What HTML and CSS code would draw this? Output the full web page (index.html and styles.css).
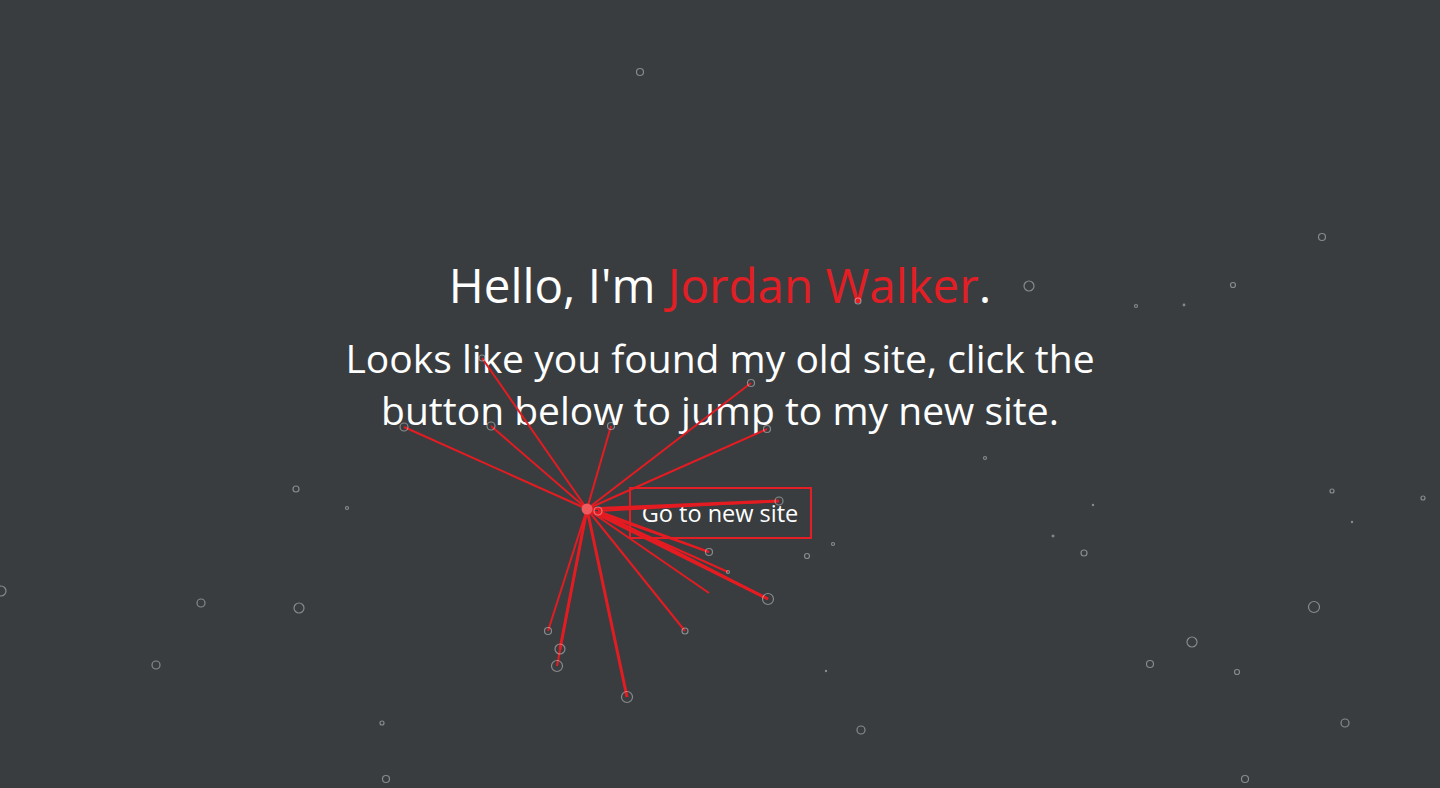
FILE: index.html
```html
<!DOCTYPE html>
<html lang="en">
<head>
<meta charset="utf-8">
<title>Jordan Walker</title>
<link rel="stylesheet" href="styles.css">
</head>
<body>
<main class="hero">
  <h1 class="title">Hello, I'm <span class="accent">Jordan Walker</span>.</h1>
  <p class="lead">Looks like you found my old site, click the<br>button below to jump to my new site.</p>
  <a class="btn" href="#">Go to new site</a>
</main>
<svg class="particles" width="1440" height="788" viewBox="0 0 1440 788" aria-hidden="true">
  <g class="links">
    <line x1="587" y1="509" x2="482" y2="358"/>
    <line x1="587" y1="509" x2="404" y2="427"/>
    <line x1="587" y1="509" x2="491" y2="426"/>
    <line x1="587" y1="509" x2="611" y2="426"/>
    <line x1="587" y1="509" x2="751" y2="383"/>
    <line x1="587" y1="509" x2="767" y2="429"/>
    <line class="thick" x1="587" y1="509" x2="779" y2="501"/>
    <line x1="587" y1="509" x2="709" y2="552"/>
    <line x1="587" y1="509" x2="728" y2="572"/>
    <line x1="587" y1="509" x2="709" y2="593"/>
    <line class="thick" x1="587" y1="509" x2="768" y2="599"/>
    <line x1="587" y1="509" x2="685" y2="631"/>
    <line x1="587" y1="509" x2="548" y2="631"/>
    <line class="thick" x1="587" y1="509" x2="560" y2="649"/>
    <line x1="587" y1="509" x2="557" y2="666"/>
    <line class="thick" x1="587" y1="509" x2="627" y2="697"/>
    <line x1="598" y1="511" x2="779" y2="501"/>
    <line x1="598" y1="511" x2="768" y2="599"/>
    <line x1="598" y1="511" x2="709" y2="552"/>
  </g>
  <g class="dots">
    <circle cx="640" cy="72" r="3.5"/>
    <circle cx="1322" cy="237" r="3.5"/>
    <circle cx="1029" cy="286" r="5"/>
    <circle cx="1233" cy="285" r="2.5"/>
    <circle cx="858" cy="301" r="3"/>
    <circle cx="1136" cy="306" r="1.5"/>
    <circle cx="1184" cy="305" r="0.8"/>
    <circle cx="985" cy="458" r="1.5"/>
    <circle cx="296" cy="489" r="3"/>
    <circle cx="347" cy="508" r="1.5"/>
    <circle cx="1332" cy="491" r="2"/>
    <circle cx="1423" cy="498" r="2"/>
    <circle cx="1093" cy="505" r="0.6"/>
    <circle cx="1053" cy="536" r="0.9"/>
    <circle cx="1084" cy="553" r="3"/>
    <circle cx="1352" cy="522" r="0.6"/>
    <circle cx="833" cy="544" r="1.5"/>
    <circle cx="807" cy="556" r="2.5"/>
    <circle cx="1" cy="591" r="5"/>
    <circle cx="201" cy="603" r="4"/>
    <circle cx="299" cy="608" r="5"/>
    <circle cx="1314" cy="607" r="5.5"/>
    <circle cx="1192" cy="642" r="5"/>
    <circle cx="156" cy="665" r="4"/>
    <circle cx="1150" cy="664" r="3.5"/>
    <circle cx="1237" cy="672" r="2.5"/>
    <circle cx="826" cy="671" r="0.6"/>
    <circle cx="382" cy="723" r="2"/>
    <circle cx="861" cy="730" r="4"/>
    <circle cx="1345" cy="723" r="4"/>
    <circle cx="386" cy="779" r="3.5"/>
    <circle cx="1245" cy="779" r="3.5"/>
    <circle cx="482" cy="358" r="3"/>
    <circle cx="404" cy="427" r="4"/>
    <circle cx="491" cy="426" r="4"/>
    <circle cx="611" cy="426" r="3.5"/>
    <circle cx="751" cy="383" r="3.5"/>
    <circle cx="767" cy="429" r="3.5"/>
    <circle cx="779" cy="501" r="4"/>
    <circle cx="598" cy="511" r="4"/>
    <circle cx="709" cy="552" r="3.5"/>
    <circle cx="728" cy="572" r="1.5"/>
    <circle cx="768" cy="599" r="5.5"/>
    <circle cx="685" cy="631" r="3"/>
    <circle cx="548" cy="631" r="3.5"/>
    <circle cx="560" cy="649" r="5"/>
    <circle cx="557" cy="666" r="5.5"/>
    <circle cx="627" cy="697" r="5.5"/>
  </g>
  <circle class="hub" cx="587" cy="509" r="5.5"/>
</svg>
</body>
</html>
```
FILE: styles.css
```css
html, body {
  margin: 0;
  padding: 0;
  height: 100%;
}

body {
  background: #393d40;
  color: #ffffff;
  font-family: "Open Sans", "Noto Sans", sans-serif;
  overflow: hidden;
}

.hero {
  min-height: 100vh;
  box-sizing: border-box;
  display: flex;
  flex-direction: column;
  align-items: center;
  justify-content: flex-start;
  padding-top: 257px;
  text-align: center;
}

.title {
  margin: 0;
  font-size: 47.5px;
  font-weight: 400;
  line-height: 56px;
}

.accent {
  color: #e31e24;
}

.lead {
  margin: 19px 0 0;
  font-size: 39px;
  font-weight: 400;
  line-height: 52px;
}

.btn {
  margin-top: 51px;
  display: inline-block;
  box-sizing: border-box;
  width: 183px;
  height: 52px;
  padding: 12px 0;
  border: 2px solid #e31e24;
  color: #ffffff;
  text-decoration: none;
  font-size: 23.5px;
  line-height: 24px;
  white-space: nowrap;
}

.particles {
  position: absolute;
  top: 0;
  left: 0;
  pointer-events: none;
}

.links line {
  stroke: #e41c22;
  stroke-width: 2;
}

.links line.thick {
  stroke-width: 3;
}

.dots circle {
  fill: none;
  stroke: rgba(255, 255, 255, 0.4);
  stroke-width: 1.2;
}

.hub {
  fill: #ef5a5f;
}
```
